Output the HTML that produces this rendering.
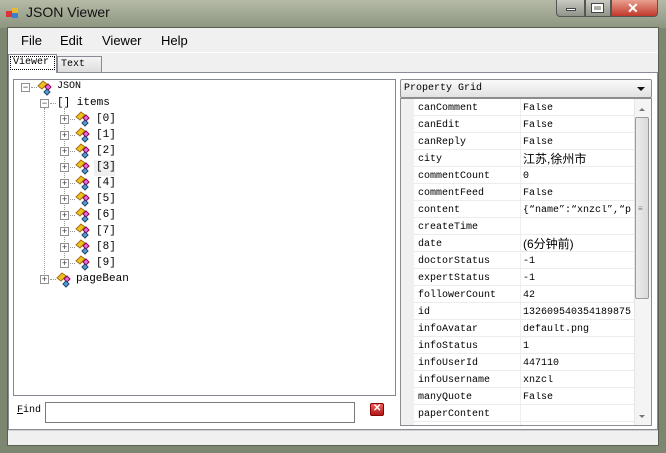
<!DOCTYPE html>
<html><head><meta charset="utf-8"><style>
*{margin:0;padding:0;box-sizing:border-box}
body{width:666px;height:453px;overflow:hidden;background:#7d8670;position:relative;font-family:"Liberation Mono","Noto Sans CJK SC",monospace;font-size:10px;color:#000}
.a{position:absolute}
.t{position:absolute;white-space:nowrap;line-height:12px}
.box{position:absolute;width:9px;height:9px;border:1px solid #919191;background:#fff;font-size:9px;line-height:7px;text-align:center;color:#333;font-family:"Liberation Sans",sans-serif}
.dv{position:absolute;border-left:1px dotted #999}
.dh{position:absolute;border-top:1px dotted #999;width:8px}
.row{position:absolute;left:414px;width:220px;height:17px;border-bottom:1px solid #ececec}
.row span{position:absolute;top:4px;white-space:nowrap;line-height:12px}
</style></head><body>
<div class="a" style="left:0;top:0;width:666px;height:28px;background:linear-gradient(#b4baa6,#8d9580)"></div>
<div class="a" style="left:6px;top:7px;width:13px;height:12px"><svg width="13" height="12"><rect x="0" y="4" width="6" height="6" fill="#d33"/><rect x="6" y="1" width="6" height="5" fill="#e8b830"/><rect x="6" y="6" width="6" height="5" fill="#3a7fd0"/></svg></div>
<div class="t" style="left:26px;top:4px;font-family:'Liberation Sans',sans-serif;font-size:14px;line-height:16px;color:#111">JSON Viewer</div>
<div class="a" style="left:556px;top:0;width:29px;height:17px;border:1px solid #555;border-top:0;border-radius:0 0 0 4px;background:linear-gradient(#c9cbc2,#8f9388)"></div>
<div class="a" style="left:566px;top:8px;width:10px;height:3px;background:#fff;border:1px solid #444"></div>
<div class="a" style="left:585px;top:0;width:26px;height:17px;border:1px solid #555;border-top:0;background:linear-gradient(#c9cbc2,#8f9388)"></div>
<div class="a" style="left:592px;top:4px;width:11px;height:8px;border:2px solid #fff;outline:1px solid #444"></div>
<div class="a" style="left:611px;top:0;width:47px;height:17px;border:1px solid #555;border-top:0;border-radius:0 0 4px 0;background:linear-gradient(#e8a090,#c0392b)"></div>
<div class="t" style="left:627px;top:1px;color:#fff;font-family:'Liberation Sans',sans-serif;font-weight:bold;font-size:14px;line-height:14px">✕</div>
<div class="a" style="left:7px;top:27px;width:652px;height:419px;background:#f0f0f0;border:1px solid #5a6150"></div>
<div class="a" style="left:8px;top:28px;width:650px;height:24px;background:#f0f0f0"></div>
<div class="t" style="left:21px;top:33px;font-family:'Liberation Sans',sans-serif;font-size:13px;line-height:15px">File</div>
<div class="t" style="left:60px;top:33px;font-family:'Liberation Sans',sans-serif;font-size:13px;line-height:15px">Edit</div>
<div class="t" style="left:102px;top:33px;font-family:'Liberation Sans',sans-serif;font-size:13px;line-height:15px">Viewer</div>
<div class="t" style="left:161px;top:33px;font-family:'Liberation Sans',sans-serif;font-size:13px;line-height:15px">Help</div>
<div class="a" style="left:8px;top:52px;width:650px;height:1px;background:#fff"></div>
<div class="a" style="left:8px;top:54px;width:49px;height:19px;background:#fff;border:1px solid #898c95;border-bottom:0;z-index:2"></div>
<div class="a" style="left:10px;top:56px;width:45px;height:14px;border:1px dotted #000;z-index:3"></div>
<div class="t" style="left:13px;top:57px;z-index:3">Viewer</div>
<div class="a" style="left:57px;top:56px;width:45px;height:17px;background:linear-gradient(#f4f4f4,#dcdcdc);border:1px solid #898c95;border-bottom:0"></div>
<div class="t" style="left:61px;top:59px">Text</div>
<div class="a" style="left:8px;top:72px;width:650px;height:358px;background:#fff;border:1px solid #898c95"></div>
<div class="a" style="left:13px;top:79px;width:383px;height:317px;border:1px solid #828790;background:#fff"></div>
<div class="dv" style="left:44px;top:108px;height:172px"></div>
<div class="dv" style="left:64px;top:108px;height:156px"></div>
<div class="box" style="left:21px;top:83px">−</div><div class="dh" style="left:31px;top:87px;width:6px"></div>
<div class="a" style="left:36px;top:80px"><svg width="20" height="16"><path d="M2 6l5-5 4 3-5 5z" fill="#f0c020" stroke="#a07010"/><path d="M9 7l3-3 3 3-3 3z" fill="#e070e0" stroke="#905"/><path d="M8 12l3-3 3 3-3 3z" fill="#50a0e0" stroke="#246"/></svg></div>
<div class="t" style="left:57px;top:81px">JSON</div>
<div class="box" style="left:40px;top:99px">−</div><div class="dh" style="left:50px;top:103px;width:6px"></div>
<div class="t" style="left:57px;top:97px;font-size:11px">[] items</div>
<div class="a" style="left:94px;top:160px;width:21px;height:16px;background:#f0f0f0"></div>
<div id="tree"></div>
<div class="box" style="left:40px;top:275px">+</div><div class="dh" style="left:50px;top:279px;width:6px"></div>
<div class="a" style="left:55px;top:272px"><svg width="20" height="16"><path d="M2 6l5-5 4 3-5 5z" fill="#f0c020" stroke="#a07010"/><path d="M9 7l3-3 3 3-3 3z" fill="#e070e0" stroke="#905"/><path d="M8 12l3-3 3 3-3 3z" fill="#50a0e0" stroke="#246"/></svg></div>
<div class="t" style="left:76px;top:273px;font-size:11px">pageBean</div>
<script>
var h='';for(var i=0;i<10;i++){var y=119+i*16;
h+='<div class="box" style="left:60px;top:'+(y-4)+'px">+</div><div class="dh" style="left:70px;top:'+y+'px;width:5px"></div>'+
'<div class="a" style="left:74px;top:'+(y-8)+'px"><svg width="20" height="16"><path d="M2 6l5-5 4 3-5 5z" fill="#f0c020" stroke="#a07010"/><path d="M9 7l3-3 3 3-3 3z" fill="#e070e0" stroke="#905"/><path d="M8 12l3-3 3 3-3 3z" fill="#50a0e0" stroke="#246"/></svg></div>'+
'<div class="t" style="left:96px;top:'+(y-6)+'px;font-size:11px">['+i+']</div>';}
document.getElementById('tree').innerHTML=h;
</script>
<div class="t" style="left:17px;top:405px"><u>F</u>ind</div>
<div class="a" style="left:45px;top:402px;width:310px;height:21px;border:1px solid #7a7a7a;background:#fff"></div>
<div class="a" style="left:370px;top:403px;width:14px;height:13px;border-radius:2px;background:linear-gradient(#f06060,#b01818);border:1px solid #800"></div>
<div class="t" style="left:373px;top:403px;color:#fff;font-size:10px;font-weight:bold;font-family:'Liberation Sans',sans-serif">✕</div>
<div class="a" style="left:400px;top:79px;width:252px;height:19px;border:1px solid #8d8d8d;border-radius:2px;background:linear-gradient(#fafafa,#e2e2e2)"></div>
<div class="t" style="left:404px;top:83px">Property Grid</div>
<div class="a" style="left:637px;top:87px;border:4px solid transparent;border-top:4px solid #111"></div>
<div class="a" style="left:400px;top:98px;width:252px;height:328px;border:1px solid #8d8d8d;background:#fff"></div>
<div class="a" style="left:401px;top:99px;width:13px;height:326px;background:#f0f0f0"></div>
<div class="a" style="left:520px;top:99px;width:1px;height:326px;background:#eee"></div>
<div id="pg"></div>
<div class="a" style="left:634px;top:99px;width:17px;height:326px;background:#f4f4f4;border-left:1px solid #e6e6e6"></div>
<div class="a" style="left:635px;top:117px;width:14px;height:182px;border:1px solid #9a9a9a;border-radius:2px;background:linear-gradient(90deg,#ececec,#dadada)"></div>
<div class="t" style="left:638px;top:204px;font-size:8px;color:#777">≡</div>
<div class="a" style="left:639px;top:105px;border:3px solid transparent;border-bottom:3px solid #777"></div>
<div class="a" style="left:639px;top:415px;border:3px solid transparent;border-top:3px solid #777"></div>
<script>
var d=[["canComment","False"],["canEdit","False"],["canReply","False"],["city","江苏,徐州市"],["commentCount","0"],["commentFeed","False"],["content","{\u201cname\u201d:\u201cxnzcl\u201d,\u201cp"],["createTime",""],["date","(6分钟前)"],["doctorStatus","-1"],["expertStatus","-1"],["followerCount","42"],["id","132609540354189875"],["infoAvatar","default.png"],["infoStatus","1"],["infoUserId","447110"],["infoUsername","xnzcl"],["manyQuote","False"],["paperContent",""]];
var h='';for(var i=0;i<d.length;i++){var y=99+i*17;var cj=/[\u4e00-\u9fff]/.test(d[i][1]);
h+='<div class="row" style="top:'+y+'px"><span style="left:4px">'+d[i][0]+'</span><span style="left:109px;width:111px;overflow:hidden;'+(cj?'font-family:\'Liberation Sans\',\'Noto Sans CJK SC\',sans-serif;font-size:12px;top:2px;line-height:14px':'')+'">'+d[i][1]+'</span></div>';}
document.getElementById('pg').innerHTML=h;
</script>
<div class="a" style="left:8px;top:430px;width:650px;height:15px;background:#f0f0f0;border-top:1px solid #d0d0d0"></div>
</body></html>
